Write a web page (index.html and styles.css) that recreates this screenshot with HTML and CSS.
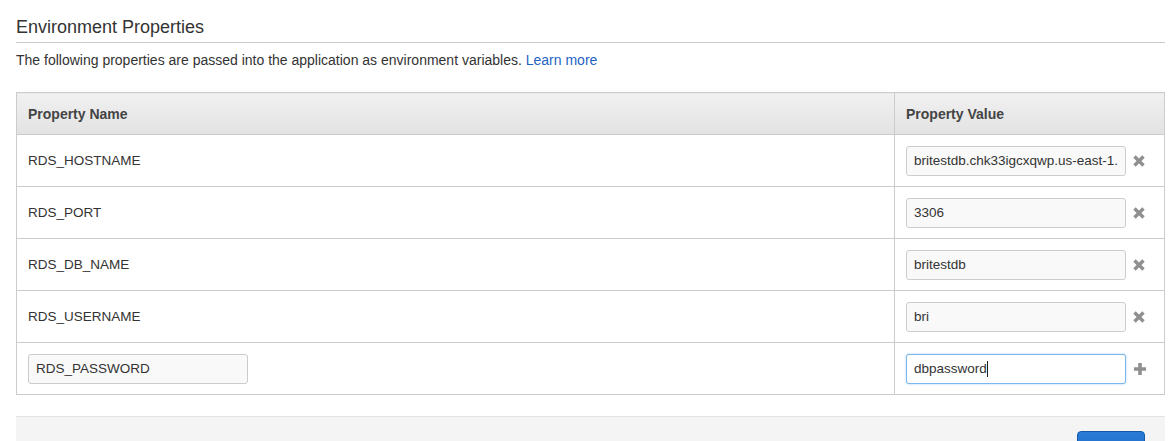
FILE: index.html
```html
<!DOCTYPE html>
<html lang="en">

<head>
    <meta charset="UTF-8">
    <meta name="viewport" content="width=device-width, initial-scale=1.0">
    <link rel="stylesheet" href="styles.css">
</head>

<body>
    <div class="page">
        <h2 class="title">Environment Properties</h2>
        <p class="intro">The following properties are passed into the application as environment variables. <a href="#">Learn more</a></p>

        <table class="props">
            <thead>
                <tr>
                    <th class="col-name">Property Name</th>
                    <th class="col-value">Property Value</th>
                </tr>
            </thead>
            <tbody>
                <tr>
                    <td>RDS_HOSTNAME</td>
                    <td>
                        <div class="value-cell">
                            <div class="field"><span class="field-text">britestdb.chk33igcxqwp.us-east-1.rds.amazonaws.com</span></div>
                            <svg class="icon" viewBox="0 0 12 12"><path d="M1.5 1.5L10.5 10.5M10.5 1.5L1.5 10.5" /></svg>
                        </div>
                    </td>
                </tr>
                <tr>
                    <td>RDS_PORT</td>
                    <td>
                        <div class="value-cell">
                            <div class="field"><span class="field-text">3306</span></div>
                            <svg class="icon" viewBox="0 0 12 12"><path d="M1.5 1.5L10.5 10.5M10.5 1.5L1.5 10.5" /></svg>
                        </div>
                    </td>
                </tr>
                <tr>
                    <td>RDS_DB_NAME</td>
                    <td>
                        <div class="value-cell">
                            <div class="field"><span class="field-text">britestdb</span></div>
                            <svg class="icon" viewBox="0 0 12 12"><path d="M1.5 1.5L10.5 10.5M10.5 1.5L1.5 10.5" /></svg>
                        </div>
                    </td>
                </tr>
                <tr>
                    <td>RDS_USERNAME</td>
                    <td>
                        <div class="value-cell">
                            <div class="field"><span class="field-text">bri</span></div>
                            <svg class="icon" viewBox="0 0 12 12"><path d="M1.5 1.5L10.5 10.5M10.5 1.5L1.5 10.5" /></svg>
                        </div>
                    </td>
                </tr>
                <tr>
                    <td>
                        <div class="field"><span class="field-text">RDS_PASSWORD</span></div>
                    </td>
                    <td>
                        <div class="value-cell">
                            <div class="field focused"><span class="field-text">dbpassword</span><span class="caret"></span></div>
                            <svg class="icon plus" viewBox="0 0 14 14"><path d="M7 1V13M1 7H13" /></svg>
                        </div>
                    </td>
                </tr>
            </tbody>
        </table>

        <div class="footer">
            <button class="btn-primary" type="button">Apply</button>
        </div>
    </div>
</body>
</html>
```

FILE: styles.css
```css
body {
    margin: 0;
    background-color: #ffffff;
    font-family: "Liberation Sans", Arial, sans-serif;
    color: #333333;
}
.page {
    padding: 0 9px 0 16px;
}
.title {
    margin: 0;
    padding: 15px 0 3px 0;
    font-size: 18px;
    font-weight: normal;
    line-height: 24px;
    color: #333333;
    border-bottom: 1px solid #cccccc;
}
.intro {
    margin: 8px 0 23px 0;
    font-size: 14px;
    line-height: 18px;
    color: #333333;
}
.intro a {
    color: #1f63c4;
    text-decoration: none;
}
.props {
    width: 100%;
    border-collapse: collapse;
    font-size: 13.5px;
}
.props th,
.props td {
    border: 1px solid #cccccc;
    padding: 0 11px;
    text-align: left;
}
.props th {
    height: 41px;
    font-size: 14px;
    font-weight: bold;
    color: #444444;
    background: linear-gradient(#f1f1f1, #e2e2e2);
}
.props td {
    height: 51px;
    color: #333333;
}
.col-value {
    width: 247px;
}
.value-cell {
    display: flex;
    align-items: center;
    gap: 7px;
}
.field {
    box-sizing: border-box;
    width: 220px;
    height: 30px;
    padding: 0 7px;
    display: flex;
    align-items: center;
    background-color: #f9f9f9;
    border: 1px solid #cccccc;
    border-radius: 3px;
    font-size: 13.5px;
    color: #333333;
}
.field-text {
    overflow: hidden;
    white-space: nowrap;
}
.field.focused {
    background-color: #ffffff;
    border-color: #7db6ea;
    box-shadow: 0 0 2px rgba(82, 160, 230, 0.6);
}
.caret {
    display: inline-block;
    flex-shrink: 0;
    width: 1px;
    height: 16px;
    background-color: #222222;
}
.icon {
    width: 12px;
    height: 12px;
    flex-shrink: 0;
    fill: none;
    stroke: #8f8f8f;
    stroke-width: 3.4;
}
.icon.plus {
    width: 14px;
    height: 14px;
    stroke-width: 3.6;
}
.footer {
    margin-top: 21px;
    padding: 14px 20px 20px 0;
    display: flex;
    justify-content: flex-end;
    background-color: #f4f4f4;
    border-top: 1px solid #e3e3e3;
}
.btn-primary {
    width: 68px;
    height: 36px;
    border: 1px solid #1558a8;
    border-radius: 4px;
    background: linear-gradient(#2a7bd6, #1b66c0);
    color: #ffffff;
    font-family: "Liberation Sans", Arial, sans-serif;
    font-size: 13px;
    font-weight: bold;
}
```
